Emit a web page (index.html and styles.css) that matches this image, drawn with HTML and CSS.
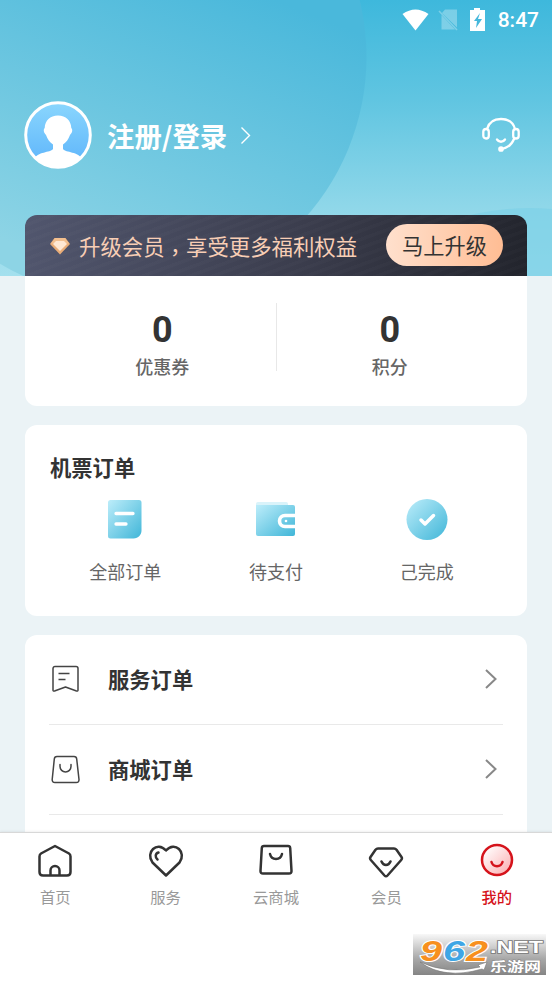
FILE: index.html
```
<!DOCTYPE html>
<html lang="zh-CN">
<head>
    <meta charset="UTF-8">
    <title>我的</title>
    <link rel="stylesheet" href="styles.css">
</head>
<body>
<div class="page">
    <div class="header">
        <svg class="header-bg" width="552" height="276" viewBox="0 0 552 276">
            <defs>
                <linearGradient id="sky" x1="0" y1="0" x2="0" y2="1">
                    <stop offset="0" stop-color="#3eb8dc"/>
                    <stop offset="0.36" stop-color="#60c5e1"/>
                    <stop offset="0.75" stop-color="#8fd7e9"/>
                    <stop offset="1" stop-color="#a4e0ee"/>
                </linearGradient>
                <linearGradient id="bubble" gradientUnits="userSpaceOnUse" x1="350" y1="30" x2="230" y2="330">
                    <stop offset="0" stop-color="#4ab8db"/>
                    <stop offset="1" stop-color="#8dd4e5"/>
                </linearGradient>
            </defs>
            <rect width="552" height="276" fill="url(#sky)"/>
            <circle cx="125" cy="57" r="241.5" fill="url(#bubble)"/>
            <circle cx="530" cy="468" r="260" fill="#7fd1e7" opacity="0.75"/>
        </svg>
        <div class="status">
            <svg width="88" height="26" viewBox="0 0 88 26">
                <path d="M2.500 6Q15.500-3 28.500 6L15.500 22.500Z" fill="#fff"/>
                <path d="M45 1.500h12v18L42 5zM41.500 7L55 21.500H41.500z" fill="#fff" opacity="0.3"/>
                <path d="M39 3l18 19" stroke="#fff" stroke-width="1.500" opacity="0.3"/>
                <path d="M74 0h6v2h5v21H70V2h4z" fill="#fff"/>
                <path d="M80 5l-6 8h3l-1 7 6-9h-4z" fill="#45b8dc"/>
            </svg>
            <span>8:47</span>
        </div>
        <div class="user">
            <svg width="68" height="68" viewBox="0 0 68 68">
                <defs>
                    <linearGradient id="face" x1="0" y1="0" x2="0" y2="1">
                        <stop offset="0" stop-color="#8ad6fd"/>
                        <stop offset="1" stop-color="#5db4fb"/>
                    </linearGradient>
                    <clipPath id="round"><circle cx="34" cy="34" r="32"/></clipPath>
                </defs>
                <circle cx="34" cy="34" r="32.300" fill="url(#face)" stroke="#fff" stroke-width="3"/>
                <g clip-path="url(#round)" fill="#fff">
                    <path d="M34 14.500c8 0 13 5 13.300 12.500 1.700 1.500 1 5-1.300 7-1.500 4.500-4 7.500-7 9.500V48c3 4 15 2 20 11v9H9v-9c5-9 17-7 20-11v-4.500c-3-2-5.500-5-7-9.500-2.300-2-3-5.500-1.300-7C21 19.500 26 14.500 34 14.500z"/>
                </g>
            </svg>
            <span class="login">注册/登录</span>
            <svg class="login-arrow" width="12" height="20" viewBox="0 0 12 20">
                <path d="M1.500 2.500L9.500 10.500l-8 8" fill="none" stroke="#fff" stroke-width="1.400"/>
            </svg>
            <svg class="kefu" width="38" height="36" viewBox="0 0 38 36" fill="none" stroke="#fff" stroke-width="2.300" stroke-linecap="round">
                <path d="M5 12C7 5 12 2 19 2s12 3 14 10M32 22c-2 5-6 9-13 10M15 22.500c2 3 6 3 8 0"/>
                <rect x="1.300" y="12" width="5.500" height="9.500" rx="2.750"/>
                <rect x="31.200" y="12" width="5.500" height="9.500" rx="2.750"/>
                <circle cx="19" cy="32" r="1.700" fill="#fff"/>
            </svg>
        </div>
        <div class="vip">
            <svg width="20" height="18" viewBox="0 0 20 18">
                <path d="M4.500 1h11L20 7l-10 10.500L0 7z" fill="#e9ad78"/>
                <path d="M5 1h10l4 5.500H1z" fill="#f3c08f"/>
                <path d="M6 4h8l3 3-7 7-7-7z" fill="#ffe8d3"/>
            </svg>
            <span class="vip-text">升级会员<i class="comma" lang="zh-TW">，</i>享受更多福利权益</span>
            <span class="vip-btn">马上升级</span>
        </div>
    </div>

    <div class="card count">
        <div class="count-item"><b>0</b><span>优惠券</span></div>
        <div class="line"></div>
        <div class="count-item"><b>0</b><span>积分</span></div>
    </div>

    <div class="card ticket">
        <h2>机票订单</h2>
        <div class="ticket-list">
            <div class="ticket-item">
                <svg width="42" height="42" viewBox="0 0 42 42">
                    <defs>
                        <linearGradient id="blue" x1="0" y1="0" x2="1" y2="1">
                            <stop offset="0" stop-color="#bdedfa"/>
                            <stop offset="1" stop-color="#40b6d8"/>
                        </linearGradient>
                    </defs>
                    <path d="M6 1h29a2.500 2.500 0 0 1 2.500 2.500v28c0 4-3 8-8 8H6.500A2.500 2.500 0 0 1 4 37V3.500A2.500 2.500 0 0 1 6.500 1z" fill="url(#blue)"/>
                    <path d="M12 14.500h17M12 25h10" stroke="#fff" stroke-width="3.300" stroke-linecap="round"/>
                </svg>
                <span>全部订单</span>
            </div>
            <div class="ticket-item">
                <svg width="42" height="42" viewBox="0 0 42 42">
                    <path d="M3 3h28a2 2 0 0 1 2 2v4H1V5a2 2 0 0 1 2-2z" fill="#d9f3fa"/>
                    <path d="M1 6h37a2 2 0 0 1 2 2v27a2 2 0 0 1-2 2H3a2 2 0 0 1-2-2z" fill="url(#blue)"/>
                    <path d="M40 16.500H30a5.500 5.500 0 0 0 0 11h10" fill="none" stroke="#fff" stroke-width="3.600"/>
                    <circle cx="31" cy="22" r="1.300" fill="#fff"/>
                </svg>
                <span>待支付</span>
            </div>
            <div class="ticket-item">
                <svg width="42" height="42" viewBox="0 0 42 42">
                    <circle cx="21" cy="20.500" r="20.500" fill="url(#blue)"/>
                    <path d="M15 21l4 4 8.500-8.500" fill="none" stroke="#fff" stroke-width="3.500" stroke-linecap="round" stroke-linejoin="round"/>
                </svg>
                <span>己完成</span>
            </div>
        </div>
    </div>

    <div class="card menu">
        <div class="menu-item">
            <svg width="32" height="30" viewBox="0 0 32 30" fill="none" stroke="#444" stroke-width="1.500" stroke-linejoin="round">
                <path d="M6 1.500h21a2 2 0 0 1 2 2V25q0 1.500-1.500 1l-11-4-11 4Q4 26.500 4 25V3.500a2 2 0 0 1 2-2zM9.500 8.500h11M9.500 14.500h7"/>
            </svg>
            <span>服务订单</span>
            <svg class="more" width="14" height="22" viewBox="0 0 14 22"><path d="M2 1l9.500 9L2 19"/></svg>
        </div>
        <div class="menu-item">
            <svg width="32" height="30" viewBox="0 0 32 30" fill="none" stroke="#444" stroke-width="1.500" stroke-linecap="round">
                <path d="M8 1.500h17q2.500 0 2.700 2.500L30 24.500q.2 3-2.800 3H6q-3 0-2.800-3L5.300 4Q5.500 1.500 8 1.500z"/>
                <path d="M11 9.500v2a5.500 5.500 0 0 0 11 0v-2"/>
            </svg>
            <span>商城订单</span>
            <svg class="more" width="14" height="22" viewBox="0 0 14 22"><path d="M2 1l9.500 9L2 19"/></svg>
        </div>
    </div>
</div>

<div class="tabbar">
    <div class="tab">
        <svg width="36" height="36" viewBox="0 0 36 36">
            <path d="M4 10.500L18 3l14 7.500q1.500 1 1.500 3V29q0 3.500-3.500 3.500H6q-3.500 0-3.500-3.500V13.500q0-2 1.500-3zM13.500 32v-4.500a4.500 4.500 0 0 1 9 0V32"/>
        </svg>
        <span>首页</span>
    </div>
    <div class="tab">
        <svg width="36" height="36" viewBox="0 0 36 36">
            <path d="M18 32.500L4.500 19.500C-3 9.500 9-2.500 18 7.500 27-2.500 39 9.500 31.500 19.500zM10.500 9.500c-3.500 1-3.500 5-1 7"/>
        </svg>
        <span>服务</span>
    </div>
    <div class="tab">
        <svg width="36" height="36" viewBox="0 0 36 36">
            <path d="M6 3h24q2 0 2.200 2l1.300 23q.1 2.500-2.500 2.500H5q-2.600 0-2.500-2.500L3.800 5Q4 3 6 3zM12 11c1.500 6.500 10.500 6.500 12 0"/>
        </svg>
        <span>云商城</span>
    </div>
    <div class="tab">
        <svg width="36" height="36" viewBox="0 0 36 36">
            <path d="M10 5.500h16q1.500 0 2.500 1.300l5 7.200q1 1.500-.3 3L19.500 32.500q-1.500 1.600-3 0L2.800 17q-1.300-1.500-.3-3l5-7.200Q8.500 5.500 10 5.500zM13.500 18.500c2 4.700 7 4.700 9 0"/>
        </svg>
        <span>会员</span>
    </div>
    <div class="tab active">
        <svg width="36" height="36" viewBox="0 0 36 36">
            <defs>
                <linearGradient id="pink" x1="0" y1="0" x2="1" y2="1">
                    <stop offset="0.1" stop-color="#fff"/>
                    <stop offset="1" stop-color="#fba9ab"/>
                </linearGradient>
            </defs>
            <circle cx="18" cy="17" r="15" fill="url(#pink)"/>
            <path d="M12.500 19c1.500 5.500 9.500 5.500 11 0"/>
        </svg>
        <span>我的</span>
    </div>
</div>

<div class="mark">
    <svg width="133" height="41" viewBox="0 0 133 41">
        <g font-family="Liberation Sans, Arial, sans-serif" font-weight="bold" font-style="italic" font-size="29" stroke="#fff" stroke-width="2" paint-order="stroke">
            <text x="7" y="26.500" textLength="22" lengthAdjust="spacingAndGlyphs" fill="#f7901e">9</text>
            <text x="30" y="26.500" textLength="22" lengthAdjust="spacingAndGlyphs" fill="#3fa6e5">6</text>
            <text x="53" y="26.500" textLength="22" lengthAdjust="spacingAndGlyphs" fill="#f7901e">2</text>
        </g>
        <text x="77" y="19" textLength="53" lengthAdjust="spacingAndGlyphs" font-family="Liberation Sans, Arial, sans-serif" font-weight="bold" font-size="17" fill="#fff" stroke="#777" stroke-width="1.500" paint-order="stroke">.NET</text>
        <text x="77" y="37" textLength="51" lengthAdjust="spacingAndGlyphs" font-family="Noto Sans CJK SC, sans-serif" font-weight="bold" font-size="13" fill="#fff" stroke="#888" stroke-width="1" paint-order="stroke">乐游网</text>
        <path d="M7 28q28 13 60 5l-2-2 9-3-3 8-2-1Q31 46 7 28z" fill="#fff" stroke="#777" stroke-width="0.600"/>
    </svg>
</div>
</body>
</html>
```
FILE: styles.css
```
body {
    margin: 0;
    height: 981px;
    overflow: hidden;
    background-color: #fff;
    font-family: "Noto Sans CJK SC", sans-serif;
    color: #333;
}

.page {
    height: 832px;
    overflow: hidden;
    background-color: #ebf3f6;
}

.header {
    position: relative;
    display: flex;
    flex-direction: column;
    height: 276px;
}

.header-bg {
    position: absolute;
    top: 0;
    left: 0;
}

.status,
.user,
.vip {
    position: relative;
    display: flex;
    align-items: center;
    box-sizing: border-box;
}

.status {
    justify-content: flex-end;
    height: 40px;
    padding-right: 13px;
    color: #fff;
    font: 500 21px/40px Roboto, sans-serif;
}

.status svg {
    margin: 2px 10px 0 0;
}

.user {
    height: 68px;
    margin-top: 61px;
    padding: 0 32px 0 24px;
}

.login {
    margin-left: 15px;
    color: #fff;
    font-size: 27.4px;
    font-weight: bold;
    line-height: 40px;
}

.login-arrow {
    margin-left: 13px;
}

.kefu {
    margin-left: auto;
    padding-bottom: 1px;
}

.vip {
    height: 61px;
    margin: auto 25px 0;
    padding: 0 24px 0 25px;
    border-radius: 12px 12px 0 0;
    background: repeating-linear-gradient(160deg, rgba(255,255,255,0.015) 0 3px, transparent 4px 8px),
        linear-gradient(100deg, #51566e, #3b3d4d 55%, #22242c);
}

.vip-text {
    margin-left: 9px;
    padding-bottom: 1px;
    color: #f8ceb5;
    font-size: 21.4px;
    white-space: nowrap;
}

.comma {
    display: inline-block;
    font-family: "Noto Sans CJK TC", sans-serif;
    font-style: normal;
    transform: translateY(5px);
}

.vip-btn {
    width: 117px;
    height: 42px;
    margin-bottom: 1px;
    margin-left: auto;
    border-radius: 21px;
    background: linear-gradient(to right, #ffe0cd, #ffbd94);
    font-size: 21.2px;
    line-height: 42px;
    text-align: center;
}

.card {
    box-sizing: border-box;
    margin: 0 25px 19px;
    border-radius: 12px;
    background-color: #fff;
}

.count {
    display: flex;
    height: 130px;
    padding-top: 27px;
    border-radius: 0 0 12px 12px;
}

.count-item {
    flex: 1;
    display: flex;
    flex-direction: column;
    align-items: center;
}

.count-item:first-child {
    padding-left: 24px;
}

.count-item:last-child {
    padding-right: 24px;
}

.count-item b {
    margin-top: 7px;
    font: bold 36px/40px Roboto, sans-serif;
}

.count-item span {
    margin-top: 3px;
    color: #666;
    font-size: 18px;
    font-weight: 500;
    line-height: 26px;
}

.line {
    width: 1px;
    height: 68px;
    background-color: #e8e8e8;
}

.ticket {
    height: 191px;
    padding: 26px 25px 0;
}

.ticket h2 {
    margin: 0;
    font-size: 21.3px;
    line-height: 32px;
}

.ticket-list {
    display: flex;
    margin-top: 16px;
}

.ticket-item {
    flex: 1;
    display: flex;
    flex-direction: column;
    align-items: center;
    color: #666;
    font-size: 18px;
    line-height: 26px;
}

.ticket-item span {
    margin-top: 17px;
}

.menu {
    height: 280px;
    padding: 0 24px;
}

.menu-item {
    display: flex;
    align-items: center;
    box-sizing: border-box;
    height: 90px;
    border-bottom: 1px solid #e9e9e9;
    font-size: 21.3px;
    font-weight: bold;
}

.menu-item span {
    margin-left: 27px;
    padding-bottom: 2px;
}

.more {
    margin-left: auto;
    margin-right: 5px;
    fill: none;
    stroke: #888;
    stroke-width: 2;
}

.tabbar {
    display: flex;
    height: 149px;
    box-sizing: border-box;
    padding-top: 10px;
    border-top: 1px solid #d8d8d8;
    box-shadow: 0 -1px 2px rgba(0,0,0,0.06);
    background-color: #fff;
}

.tab {
    flex: 1;
    display: flex;
    flex-direction: column;
    align-items: center;
    color: #999;
    font-size: 15.3px;
    line-height: 22px;
}

.tab svg {
    fill: none;
    stroke: #333;
    stroke-width: 2.5;
    stroke-linecap: round;
    stroke-linejoin: round;
}

.tab span {
    margin-top: 6px;
}

.active {
    color: #d5131b;
    font-weight: 500;
}

.active svg {
    stroke: #d5131b;
}

/* watermark over the bottom corner */
.mark {
    position: absolute;
    top: 934px;
    left: 413px;
    width: 133px;
    height: 41px;
    background: linear-gradient(#f8f8f8, #a8a8a8 60%, #858585);
}
```
